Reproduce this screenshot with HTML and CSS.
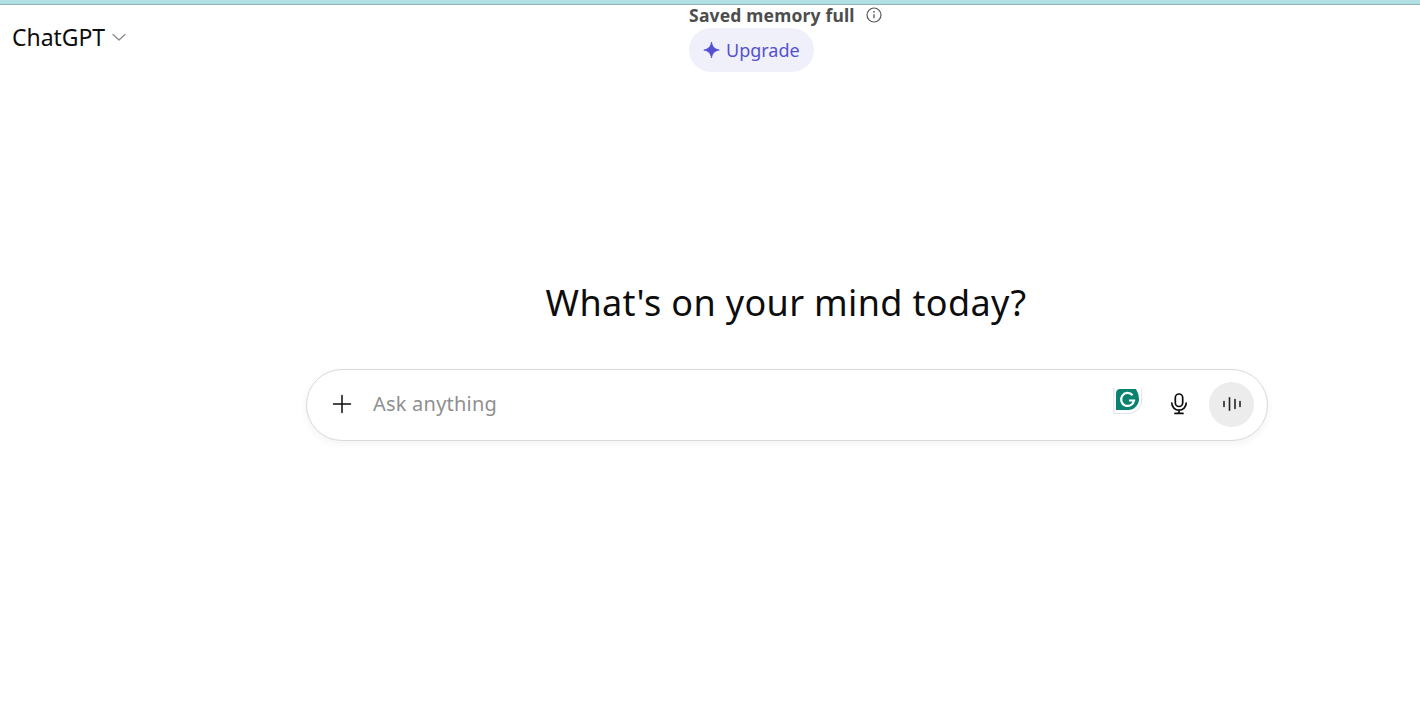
FILE: index.html
```html
<!DOCTYPE html>
<html lang="en">
<head>
<meta charset="utf-8">
<title>ChatGPT</title>
<link rel="stylesheet" href="styles.css">
</head>
<body>
<div class="stripe"></div>
<header class="topbar">
  <button class="model">
    <span class="model-name">ChatGPT</span>
    <svg class="chev" width="16" height="16" viewBox="0 0 16 16" fill="none"><path d="M2 5.500 8 11l6-5.500" stroke="#8a8a8a" stroke-width="1.300" stroke-linecap="round" stroke-linejoin="round"/></svg>
  </button>
  <div class="notice">
    <div class="notice-row">
      <span class="notice-text">Saved memory full</span>
      <svg width="18" height="18" viewBox="0 0 18 18" fill="none"><circle cx="9" cy="9" r="7" stroke="#555" stroke-width="1.200"/><path d="M9 8.200v4" stroke="#555" stroke-width="1.300"/><circle cx="9" cy="5.800" r=".9" fill="#555"/></svg>
    </div>
    <button class="upgrade">
      <svg width="18" height="18" viewBox="0 0 18 18"><path d="M9.500 1c.8 4.700 2.700 6.900 7.700 8-5 1.100-6.900 3.300-7.700 8-.8-4.700-2.700-6.900-7.700-8 5-1.100 6.900-3.300 7.700-8z" fill="#5550cf" stroke="#5550cf" stroke-width=".8" stroke-linejoin="round"/></svg>
      <span>Upgrade</span>
    </button>
  </div>
</header>
<main class="main">
  <h1 class="headline">What's on your mind today?</h1>
  <div class="composer">
    <svg class="plus" width="20" height="20" viewBox="0 0 20 20" fill="none"><path d="M10 1.500v17M1.500 10h17" stroke="#0d0d0d" stroke-width="1.500" stroke-linecap="round"/></svg>
    <span class="placeholder">Ask anything</span>
    <div class="grammarly">
      <svg width="30" height="28" viewBox="0 0 30 28"><path d="M.8 0v25.500H15A13.500 13.500 0 0 0 28.800 12V0" fill="#fff" stroke="#dde3e8" stroke-width="1"/><path d="M3 22V6q0-5 4-5h16q3 5 3 10A11 11 0 0 1 15 22z" fill="#0b8270"/><path d="M19.600 7.300A6.500 6.500 0 1 0 21 12.500h-5" fill="none" stroke="#fff" stroke-width="2.200"/></svg>
    </div>
    <svg class="mic" width="24" height="24" viewBox="0 0 24 24" fill="none" stroke="#0d0d0d" stroke-width="1.700" stroke-linecap="round"><rect x="8.300" y="2" width="7.400" height="12.500" rx="3.700"/><path d="M4.800 11a7.200 7.200 0 0 0 14.400 0M12 18.200v3M8 21.400h8"/></svg>
    <button class="voice">
      <svg width="20" height="20" viewBox="0 0 20 20" stroke="#222" stroke-width="1.600" stroke-linecap="round"><path d="M2 7.500v5M7.500 3.700v12.600M13 5.500v9M18 7.500v5"/></svg>
    </button>
  </div>
</main>
</body>
</html>
```
FILE: styles.css
```css
* { box-sizing: border-box; }
html, body { margin: 0; height: 100%; background: #fff; overflow: hidden; }
body { font-family: "Noto Sans", "Open Sans", sans-serif; color: #0d0d0d; width: 1420px; height: 708px; }
button { font: inherit; border: 0; background: none; padding: 0; color: inherit; }
.stripe { height: 5px; background: #b2dfe3; border-bottom: 1px solid #8fb4b8; }
.topbar { display: flex; align-items: flex-start; height: 90px; }
.model { display: flex; align-items: center; gap: 6px; margin: 16px 0 0 12px; height: 32px; }
.model-name { font-size: 23px; letter-spacing: -0.05px; line-height: 32px; color: #0d0d0d; }
.notice { margin-left: 562px; display: flex; flex-direction: column; align-items: flex-start; }
.notice-row { display: flex; align-items: center; gap: 10px; height: 20px; }
.notice-text { font-size: 17.500px; font-weight: 700; letter-spacing: 0.18px; color: #4d4d4d; line-height: 20px; }
.upgrade { display: flex; align-items: center; gap: 6px; height: 44px; margin-top: 3px; padding: 0 14px 0 13px; border-radius: 22px; background: #f0f0fb; color: #5550cf; font-size: 18px; letter-spacing: -0.02px; }
.main { display: flex; flex-direction: column; align-items: center; }
.headline { margin: 183px 0 0 152px; font-size: 36px; font-weight: 400; line-height: 50px; letter-spacing: 0.35px; color: #0d0d0d; }
.composer { display: flex; align-items: center; width: 962px; height: 72px; margin: 41px 0 0 154px; padding: 0 13px 0 25px; border: 1px solid #d9d9d9; border-radius: 36px; background: #fff; box-shadow: 0 3px 8px rgba(0,0,0,.05); }
.plus { flex: none; margin-top: -2px; }
.placeholder { flex: 1; margin: -4px 0 0 21px; font-size: 20px; letter-spacing: 0.22px; color: #8f8f8f; }
.grammarly { display: flex; margin: -7px 24px 0 0; }
.mic { flex: none; margin: -2px 18px 0 0; }
.voice { display: flex; align-items: center; justify-content: center; width: 45px; height: 45px; margin-top: -2px; border-radius: 50%; background: #ececec; }
```
